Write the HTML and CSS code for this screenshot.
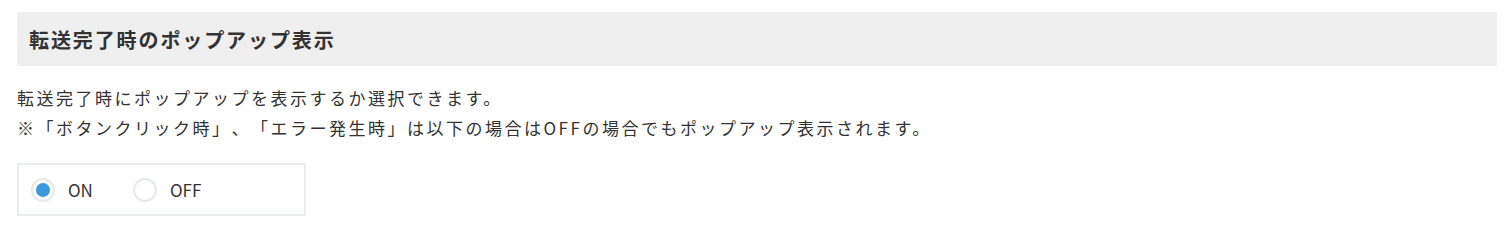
FILE: index.html
```
<!DOCTYPE html>
<html lang="ja">
<head>
    <meta charset="UTF-8">
    <title>転送完了時のポップアップ表示</title>
    <link rel="stylesheet" href="styles.css">
</head>
<body>
    <div class="section">
        <h2 class="section-title">転送完了時のポップアップ表示</h2>
        <p class="section-text">転送完了時にポップアップを表示するか選択できます。<br>※「ボタンクリック時」、「エラー発生時」は以下の場合はOFFの場合でもポップアップ表示されます。</p>
        <div class="radio-group">
            <label class="radio-item">
                <input type="radio" name="popup" value="on" checked>
                <span class="radio-mark"></span>
                <span class="radio-label">ON</span>
            </label>
            <label class="radio-item">
                <input type="radio" name="popup" value="off">
                <span class="radio-mark"></span>
                <span class="radio-label">OFF</span>
            </label>
        </div>
    </div>
</body>
</html>
```
FILE: styles.css
```
* {
    box-sizing: border-box;
}
body {
    font-family: "Noto Sans CJK JP", "Noto Sans", sans-serif;
    margin: 0;
    padding: 0;
    background-color: #ffffff;
    color: #333333;
    text-spacing-trim: space-all;
}
.section {
    padding: 12px 12px 0 17px;
}
.section-title {
    margin: 0;
    height: 54px;
    padding: 0 12px;
    display: flex;
    align-items: center;
    background-color: #efefef;
    font-size: 20px;
    font-weight: 700;
    letter-spacing: 1.9px;
    color: #333333;
}
.section-text {
    margin: 17px 0 0;
    font-size: 17px;
    line-height: 30px;
    letter-spacing: 2.5px;
    color: #333333;
}
.radio-group {
    display: flex;
    align-items: center;
    width: 289px;
    height: 53px;
    margin-top: 20px;
    padding-left: 12px;
    border: 2px solid #e9ecec;
}
.radio-item {
    display: flex;
    align-items: center;
    margin-right: 40px;
    cursor: pointer;
}
.radio-item input {
    display: none;
}
.radio-mark {
    width: 24px;
    height: 24px;
    border: 2px solid #e6e9ea;
    border-radius: 50%;
    display: flex;
    align-items: center;
    justify-content: center;
}
.radio-item input:checked + .radio-mark::after {
    content: "";
    width: 14px;
    height: 14px;
    border-radius: 50%;
    background-color: #3a9ae0;
}
.radio-label {
    margin-left: 13px;
    font-size: 17px;
    color: #333333;
}
```
